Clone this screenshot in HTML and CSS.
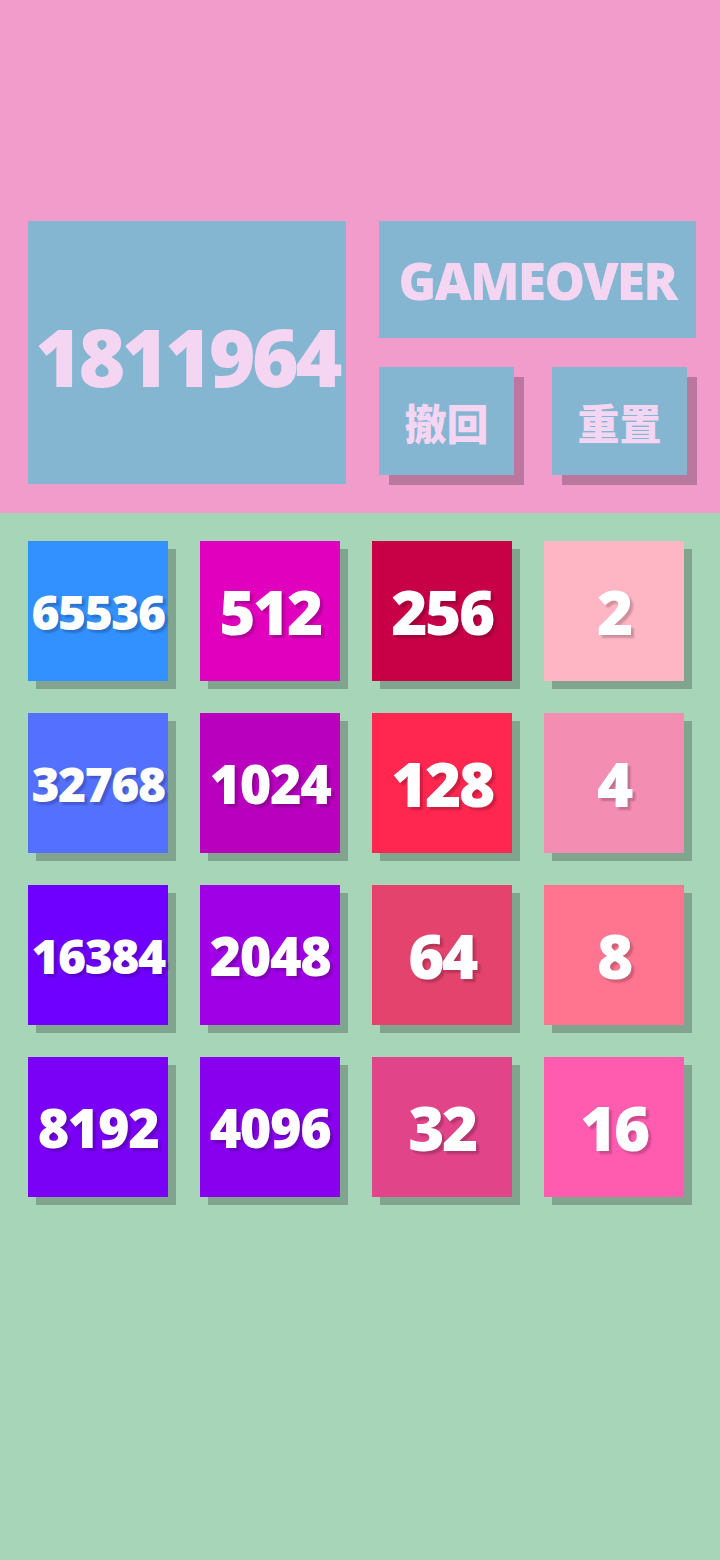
FILE: index.html
```html
<!DOCTYPE html>
<html lang="zh-Hant">
<head>
    <meta charset="UTF-8">
    <meta name="viewport" content="width=device-width, initial-scale=1.0">
    <title>2048</title>
    <link rel="stylesheet" href="styles.css">
</head>
<body>
    <div class="header">
        <div class="score">1811964</div>
        <div class="side">
            <div class="status">GAMEOVER</div>
            <div class="buttons">
                <button class="btn">撤回</button>
                <button class="btn">重置</button>
            </div>
        </div>
    </div>

    <div class="board">
        <div class="tile t65536 d5">65536</div>
        <div class="tile t512">512</div>
        <div class="tile t256">256</div>
        <div class="tile t2">2</div>

        <div class="tile t32768 d5">32768</div>
        <div class="tile t1024 d4">1024</div>
        <div class="tile t128">128</div>
        <div class="tile t4">4</div>

        <div class="tile t16384 d5">16384</div>
        <div class="tile t2048 d4">2048</div>
        <div class="tile t64">64</div>
        <div class="tile t8">8</div>

        <div class="tile t8192 d4">8192</div>
        <div class="tile t4096 d4">4096</div>
        <div class="tile t32">32</div>
        <div class="tile t16">16</div>
    </div>
</body>
</html>
```

FILE: styles.css
```css
body {
    margin: 0;
    min-height: 1560px;
    background: #a6d5b8;
    font-family: "Noto Sans", sans-serif;
    font-weight: 900;
}
.header {
    background: #f29ccc;
    height: 513px;
    box-sizing: border-box;
    padding: 221px 0 0 28px;
    display: flex;
    gap: 33px;
}
.score {
    width: 318px;
    height: 263px;
    background: #84b5d1;
    color: #f5d6f2;
    font-size: 80px;
    letter-spacing: -3.5px;
    padding-top: 6px;
    box-sizing: border-box;
    display: flex;
    align-items: center;
    justify-content: center;
}
.side {
    width: 317px;
}
.status {
    height: 117px;
    background: #84b5d1;
    color: #f5d6f2;
    font-size: 51px;
    letter-spacing: -1.5px;
    display: flex;
    align-items: center;
    justify-content: center;
}
.buttons {
    display: flex;
    gap: 38px;
    margin-top: 29px;
}
.btn {
    width: 135px;
    height: 108px;
    border: none;
    padding: 0;
    background: #84b5d1;
    color: #f5d6f2;
    font-family: "Noto Sans CJK TC", sans-serif;
    font-weight: 900;
    font-size: 42px;
    box-shadow: 10px 10px 0 #bb789e;
}
.board {
    display: grid;
    grid-template-columns: repeat(4, 140px);
    gap: 32px;
    padding: 28px;
}
.tile {
    height: 140px;
    color: #fff;
    font-size: 62px;
    letter-spacing: -2.5px;
    display: flex;
    align-items: center;
    justify-content: center;
    box-shadow: 8px 8px 0 #80a48d;
    text-shadow: 3px 3px 2px rgba(0, 0, 0, 0.2);
}
.tile.d4 {
    font-size: 54px;
    letter-spacing: -1.5px;
}
.tile.d5 {
    font-size: 48px;
    letter-spacing: -1.5px;
}
.t2 { background: #ffb6c4; }
.t4 { background: #f38db1; }
.t8 { background: #ff7590; }
.t16 { background: #ff5caf; }
.t32 { background: #e2448a; }
.t64 { background: #e3436c; }
.t128 { background: #ff2650; }
.t256 { background: #c80046; }
.t512 { background: #e000be; }
.t1024 { background: #b800be; }
.t2048 { background: #a000e5; }
.t4096 { background: #8800ee; }
.t8192 { background: #7a00f6; }
.t16384 { background: #6f00ff; }
.t32768 { background: #5470ff; }
.t65536 { background: #3390ff; }
```
